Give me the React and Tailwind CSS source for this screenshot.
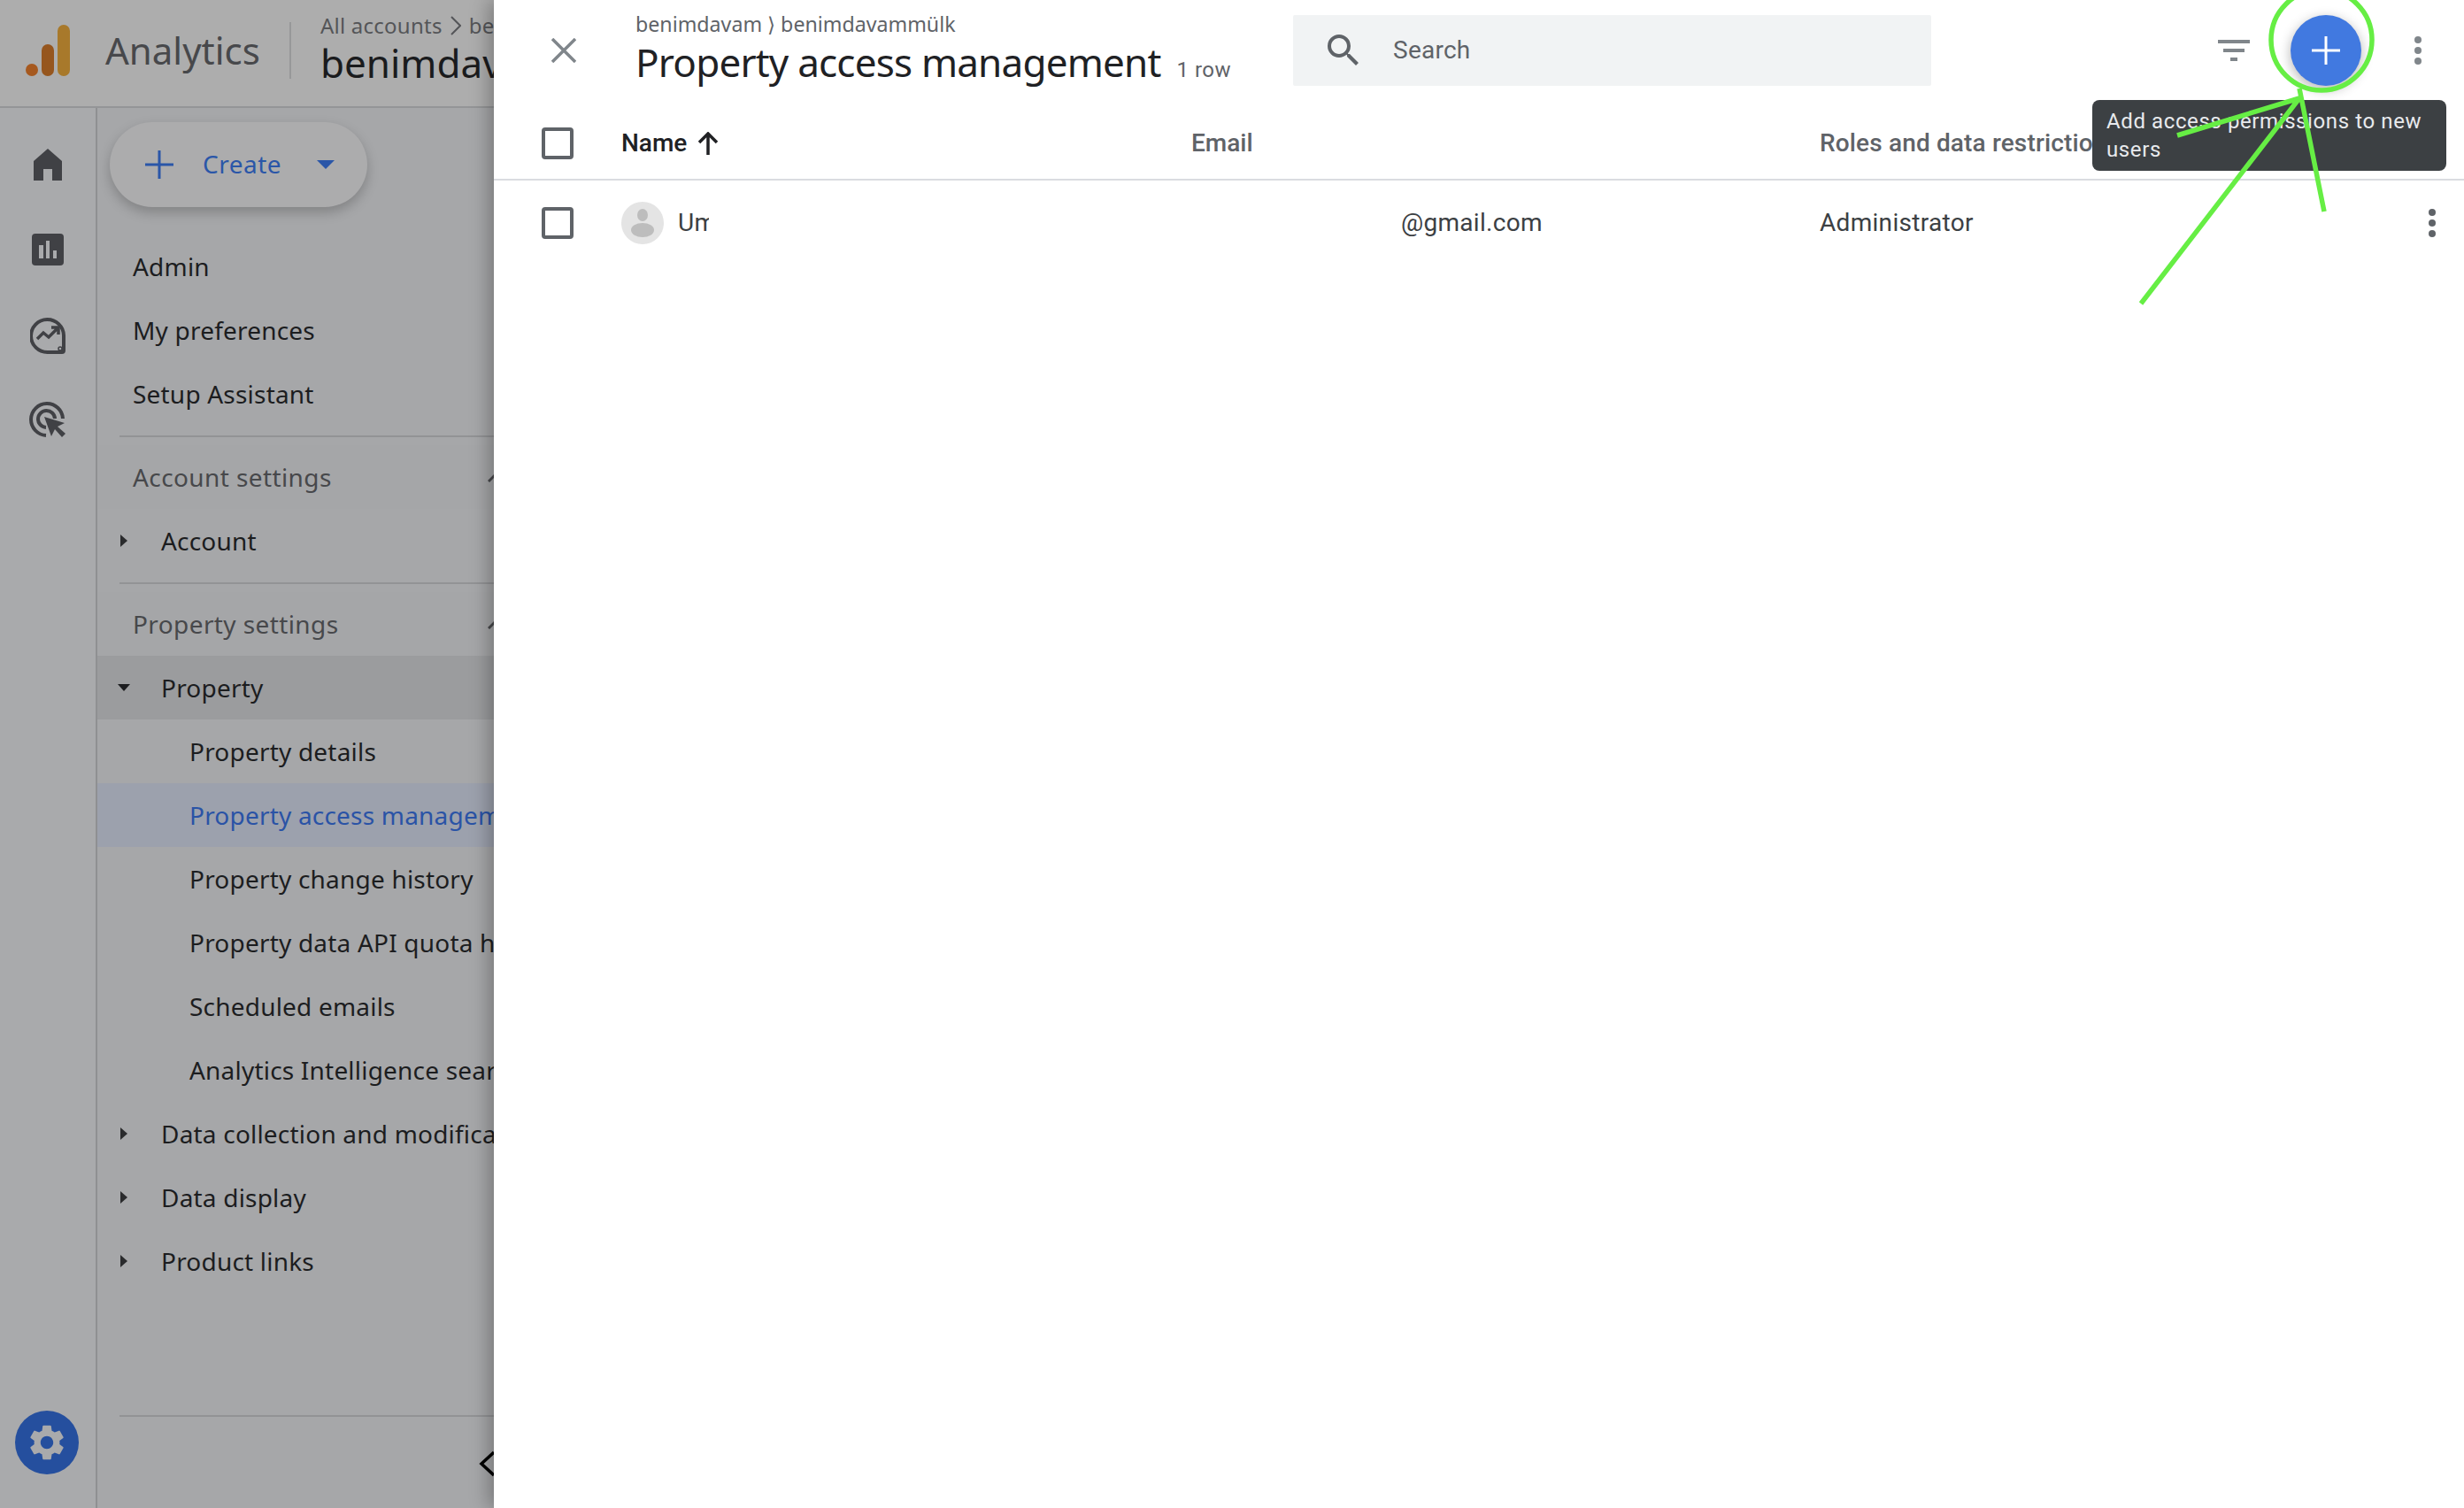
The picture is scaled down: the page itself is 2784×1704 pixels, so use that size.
const NavRow = ({ children, indent = "pl-[150px]", className = "", caret }) => (
  <div className={`relative flex h-[72px] items-center whitespace-nowrap text-[28px] tracking-[0.2px] text-[#1c1d1f] ${indent} ${className}`}>
    {caret === "right" && (
      <svg className="absolute left-[136px] top-[29px]" width="8" height="14" viewBox="0 0 8 14"><path d="M0 0l8 7-8 7z" fill="#2a2b2d" /></svg>
    )}
    {caret === "down" && (
      <svg className="absolute left-[133px] top-[32px]" width="14" height="8" viewBox="0 0 14 8"><path d="M0 0h14L7 8z" fill="#1c1d1f" /></svg>
    )}
    {children}
  </div>
);

const SectionHead = ({ children }) => (
  <div className="relative flex h-[72px] items-center whitespace-nowrap bg-[#a5a6a8] pl-[40px] text-[28px] tracking-[0.4px] text-[#47484b]">
    {children}
    <svg className="absolute left-[441px] top-[30px]" width="20" height="12" viewBox="0 0 20 12"><path d="M1 11L10 2l9 9" fill="none" stroke="#47484b" strokeWidth="3" /></svg>
  </div>
);

const Checkbox = () => <div className="h-[36px] w-[36px] rounded-[4px] border-[4px] border-[#5f6368]" />;

const Dots = ({ color }) => (
  <svg width="8" height="32" viewBox="0 0 8 32"><g fill={color}><circle cx="4" cy="4" r="4" /><circle cx="4" cy="16" r="4" /><circle cx="4" cy="28" r="4" /></g></svg>
);

const Rail = () => (
  <div className="flex w-[110px] shrink-0 flex-col items-center border-r-2 border-[#8f9092] bg-[#a9aaac]">
    <svg className="mt-[46px]" width="32" height="36" viewBox="0 0 32 36"><path d="M16 0l16 14v22H21V23H11v13H0V14z" fill="#404145" /></svg>
    <svg className="mt-[60px]" width="36" height="36" viewBox="0 0 36 36">
      <rect width="36" height="36" rx="4" fill="#404145" />
      <path d="M8 13h5v15H8zM16 8h4v20h-4zM24 19h4v9h-4z" fill="#a9aaac" />
    </svg>
    <svg className="mt-[58px]" width="40" height="42" viewBox="0 0 40 42" fill="none" stroke="#404145">
      <path d="M38 21a18.500 18.500 0 1 0-18.500 19H36a2 2 0 0 0 2-2z" strokeWidth="4" />
      <path d="M8 25l7-7 6 5 10-10M24 12h8v8" strokeWidth="3.500" />
      <circle cx="34" cy="36" r="2" fill="#a9aaac" strokeWidth="1.500" />
    </svg>
    <svg className="mt-[54px]" width="42" height="42" viewBox="0 0 42 42" fill="none" stroke="#404145" strokeWidth="4">
      <path d="M19 38A18 18 0 1 1 38 19" />
      <path d="M19 29a9.500 9.500 0 1 1 10-10" />
      <path d="M17 17l8 22 4-8 8 9 4-4-9-8 8-4z" fill="#404145" stroke="none" />
    </svg>
    <div className="mt-auto mb-[38px] mr-[2px] flex h-[72px] w-[72px] items-center justify-center rounded-full bg-[#254f9e]">
      <svg width="48" height="48" viewBox="0 0 24 24"><path fill="#a9aaac" d="M19.14 12.94c.04-.3.06-.61.06-.94 0-.32-.02-.64-.07-.94l2.030-1.580a.49.49 0 0 0 .12-.61l-1.920-3.320a.488.488 0 0 0-.59-.22l-2.390.96c-.5-.38-1.030-.7-1.620-.94l-.36-2.540a.484.484 0 0 0-.48-.41h-3.840c-.24 0-.43.17-.47.41l-.36 2.540c-.59.24-1.130.57-1.620.94l-2.390-.96c-.22-.08-.47 0-.59.22L2.740 8.870c-.12.21-.08.47.12.61l2.030 1.580c-.05.3-.09.63-.09.94s.02.64.07.94l-2.030 1.580a.49.49 0 0 0-.12.61l1.920 3.320c.12.22.37.29.59.22l2.390-.96c.5.38 1.030.7 1.620.94l.36 2.540c.05.24.24.41.48.41h3.840c.24 0 .44-.17.47-.41l.36-2.540c.59-.24 1.130-.56 1.620-.94l2.390.96c.22.08.47 0 .59-.22l1.920-3.320c.12-.22.07-.47-.12-.61l-2.010-1.580zM12 15.600c-1.980 0-3.600-1.620-3.600-3.600s1.620-3.600 3.600-3.600 3.600 1.620 3.600 3.600-1.620 3.600-3.600 3.600z" /></svg>
    </div>
  </div>
);

const Nav = () => (
  <div className="flex min-w-0 flex-1 flex-col bg-[#a6a7a9]">
    <div className="ml-[14px] mt-[16px] flex h-[96px] w-[291px] items-center rounded-full bg-[#acacad] shadow-[0_6px_14px_rgba(0,0,0,0.22)]">
      <svg className="ml-[40px]" width="32" height="32" viewBox="0 0 32 32"><path d="M14.500 0h3v14.500H32v3H17.500V32h-3V17.500H0v-3h14.500z" fill="#2a56a8" /></svg>
      <span className="ml-[33px] -mt-[3px] text-[28px] tracking-[0.5px] text-[#2a56a8]">Create</span>
      <svg className="ml-[40px]" width="20" height="10" viewBox="0 0 20 10"><path d="M0 0h20L10 10z" fill="#2a56a8" /></svg>
    </div>
    <div className="mt-[31px] w-[560px] -ml-[110px]">
      <NavRow>Admin</NavRow>
      <NavRow>My preferences</NavRow>
      <NavRow>Setup Assistant</NavRow>
    </div>
    <div className="ml-[25px] mt-[11px] h-[2px] bg-[#929395]" />
    <div className="mt-[9px]">
      <SectionHead>Account settings</SectionHead>
      <div className="-ml-[110px]"><NavRow indent="pl-[182px]" caret="right">Account</NavRow></div>
    </div>
    <div className="ml-[25px] mt-[11px] h-[2px] bg-[#929395]" />
    <div className="mt-[9px]">
      <SectionHead>Property settings</SectionHead>
      <div className="-ml-[110px]">
        <div className="ml-[110px] bg-[#9b9c9e]"><div className="-ml-[110px]"><NavRow indent="pl-[182px]" caret="down">Property</NavRow></div></div>
        <NavRow indent="pl-[214px]">Property details</NavRow>
        <div className="ml-[110px] bg-[#9ca1ad]"><div className="-ml-[110px]"><NavRow indent="pl-[214px]" className="!text-[#2a53a6]">Property access management</NavRow></div></div>
        <NavRow indent="pl-[214px]">Property change history</NavRow>
        <NavRow indent="pl-[214px]">Property data API quota history</NavRow>
        <NavRow indent="pl-[214px]">Scheduled emails</NavRow>
        <NavRow indent="pl-[214px]">Analytics Intelligence search history</NavRow>
        <NavRow indent="pl-[182px]" caret="right">Data collection and modification</NavRow>
        <NavRow indent="pl-[182px]" caret="right">Data display</NavRow>
        <NavRow indent="pl-[182px]" caret="right">Product links</NavRow>
      </div>
    </div>
    <div className="ml-[25px] mt-auto flex h-[105px] flex-col border-t-2 border-[#929395]">
      <svg className="ml-[406px] mt-[38px]" width="20" height="30" viewBox="0 0 20 30"><path d="M17 2L3 15l14 13" fill="none" stroke="#000" strokeWidth="3.500" /></svg>
    </div>
  </div>
);

const LeftColumn = () => (
  <div className="flex w-[558px] shrink-0 flex-col overflow-hidden" style={{ fontFamily: "'Noto Sans', Roboto, sans-serif" }}>
    <div className="flex h-[122px] shrink-0 items-center overflow-hidden border-b-2 border-[#949597] bg-[#adadad] pb-[6px]">
      <svg className="ml-[29px] shrink-0" width="50" height="58" viewBox="0 0 50 58">
        <rect x="36" y="0" width="14" height="58" rx="7" fill="#a8792b" />
        <rect x="18" y="22" width="14" height="36" rx="7" fill="#96561e" />
        <circle cx="7" cy="51" r="7" fill="#a6591f" />
      </svg>
      <span className="ml-[40px] -mt-[2px] whitespace-nowrap text-[42px] text-[#47484b]">Analytics</span>
      <div className="ml-[33px] h-[64px] w-[2px] shrink-0 bg-[#979899]" />
      <div className="ml-[33px] flex flex-col whitespace-nowrap pb-[4px]">
        <div className="flex h-[30px] items-center text-[24px] tracking-[0.25px] text-[#545558]">
          All accounts
          <svg className="mx-[9px]" width="12" height="22" viewBox="0 0 12 22"><path d="M1 1l10 10L1 21" fill="none" stroke="#545558" strokeWidth="2" /></svg>
          benimdavam
        </div>
        <div className="mt-[1px] text-[44px] leading-[52px] text-[#1a1b1d]">benimdavammülk</div>
      </div>
    </div>
    <div className="flex min-h-0 flex-1">
      <Rail />
      <Nav />
    </div>
  </div>
);

const Panel = () => (
  <div className="relative z-10 flex min-w-0 flex-1 flex-col bg-white shadow-[-6px_0_20px_rgba(0,0,0,0.28)]" style={{ fontFamily: "Roboto, sans-serif" }}>
    <div className="flex h-[122px] shrink-0 items-center pb-[8px]">
      <svg className="ml-[65px] shrink-0" width="28" height="28" viewBox="0 0 28 28"><path d="M1 1l26 26M27 1L1 27" fill="none" stroke="#80868b" strokeWidth="3.500" /></svg>
      <div className="ml-[67px] flex w-[743px] shrink-0 flex-col whitespace-nowrap pt-[11px]">
        <div className="-mt-[8px] text-[23.200px] leading-[30px] text-[#5f6368]" style={{ fontFamily: "'Noto Sans', sans-serif" }}>benimdavam ⟩ benimdavammülk</div>
        <div className="mt-[2px] flex items-baseline leading-[52px]">
          <span className="text-[44px] tracking-[-0.8px] text-[#202124]" style={{ fontFamily: "'Noto Sans', sans-serif" }}>Property access management</span>
          <span className="ml-[18px] text-[24px] tracking-[0.5px] text-[#5f6368]">1 row</span>
        </div>
      </div>
      <div className="flex h-[80px] w-[721px] shrink-0 items-center rounded-[2px] bg-[#f1f3f4]">
        <svg className="ml-[33px]" width="48" height="48" viewBox="0 0 24 24"><path fill="#5f6368" d="M15.500 14h-.79l-.28-.27A6.470 6.470 0 0 0 16 9.500 6.500 6.500 0 1 0 9.500 16c1.610 0 3.090-.59 4.230-1.570l.27.28v.79l5 4.990L20.490 19l-4.990-5zm-6 0C7.010 14 5 11.990 5 9.500S7.010 5 9.500 5 14 7.010 14 9.500 11.990 14 9.500 14z" /></svg>
        <span className="ml-[32px] text-[28px] tracking-[0.25px] text-[#5f6368]">Search</span>
      </div>
      <div className="ml-[324px] flex h-[24px] w-[36px] shrink-0 flex-col items-center justify-between">
        <div className="h-[4px] w-[36px] bg-[#80868b]" />
        <div className="h-[4px] w-[24px] bg-[#80868b]" />
        <div className="h-[4px] w-[8px] bg-[#80868b]" />
      </div>
      <div className="ml-[46px] flex h-[80px] w-[80px] shrink-0 items-center justify-center rounded-full bg-[#4179e0] shadow-[0_4px_14px_rgba(0,0,0,0.3)]">
        <svg width="32" height="32" viewBox="0 0 32 32"><path d="M14.500 0h3v14.500H32v3H17.500V32h-3V17.500H0v-3h14.500z" fill="#fff" /></svg>
      </div>
      <div className="ml-[60px] shrink-0"><Dots color="#80868b" /></div>
    </div>
    <div className="flex h-[82px] shrink-0 items-center border-b-2 border-[#dadce0] text-[28px] font-medium">
      <div className="ml-[54px] w-[90px]"><Checkbox /></div>
      <div className="flex w-[644px] items-center text-[#202124]">
        Name
        <svg className="ml-[12px]" width="24" height="26" viewBox="0 0 24 26"><path d="M12 26V3M2 12l10-10 10 10" fill="none" stroke="#202124" strokeWidth="3.500" /></svg>
      </div>
      <div className="w-[710px] text-[#5f6368]">Email</div>
      <div className="whitespace-nowrap tracking-[0.15px] text-[#5f6368]">Roles and data restrictions</div>
    </div>
    <div className="flex h-[96px] shrink-0 items-center text-[28px] tracking-[0.3px] text-[#3c4043]">
      <div className="ml-[54px] w-[90px]"><Checkbox /></div>
      <div className="flex w-[644px] items-center">
        <svg width="48" height="48" viewBox="0 0 48 48"><circle cx="24" cy="24" r="24" fill="#e4e4e4" /><ellipse cx="24" cy="15" rx="6" ry="7" fill="#bdbdbd" /><ellipse cx="24" cy="32" rx="13" ry="8" fill="#bdbdbd" /></svg>
        <div className="ml-[16px] w-[35px] overflow-hidden whitespace-nowrap">Umut</div>
      </div>
      <div className="w-[710px] pl-[237px]">@gmail.com</div>
      <div>Administrator</div>
      <div className="ml-auto mr-[32px]"><Dots color="#5f6368" /></div>
    </div>
    <div className="absolute left-[1806px] top-[113px] w-[400px] rounded-[8px] bg-[#3c4043] px-[16px] py-[8px] text-[24px] leading-[32px] tracking-[0.6px] text-[#e8eaed]">
      Add access permissions to new users
    </div>
  </div>
);

export default function App() {
  return (
    <div className="relative flex h-[1704px] w-[2784px] overflow-hidden bg-white">
      <LeftColumn />
      <Panel />
      <svg className="pointer-events-none absolute left-0 top-0 z-20" width="2784" height="1704" viewBox="0 0 2784 1704" fill="none" stroke="#66ee44" strokeWidth="5.500">
        <circle cx="2623" cy="45" r="57" />
        <path d="M2460 153L2598 111M2419 343L2598 111M2626 239L2598 100" />
      </svg>
    </div>
  );
}
